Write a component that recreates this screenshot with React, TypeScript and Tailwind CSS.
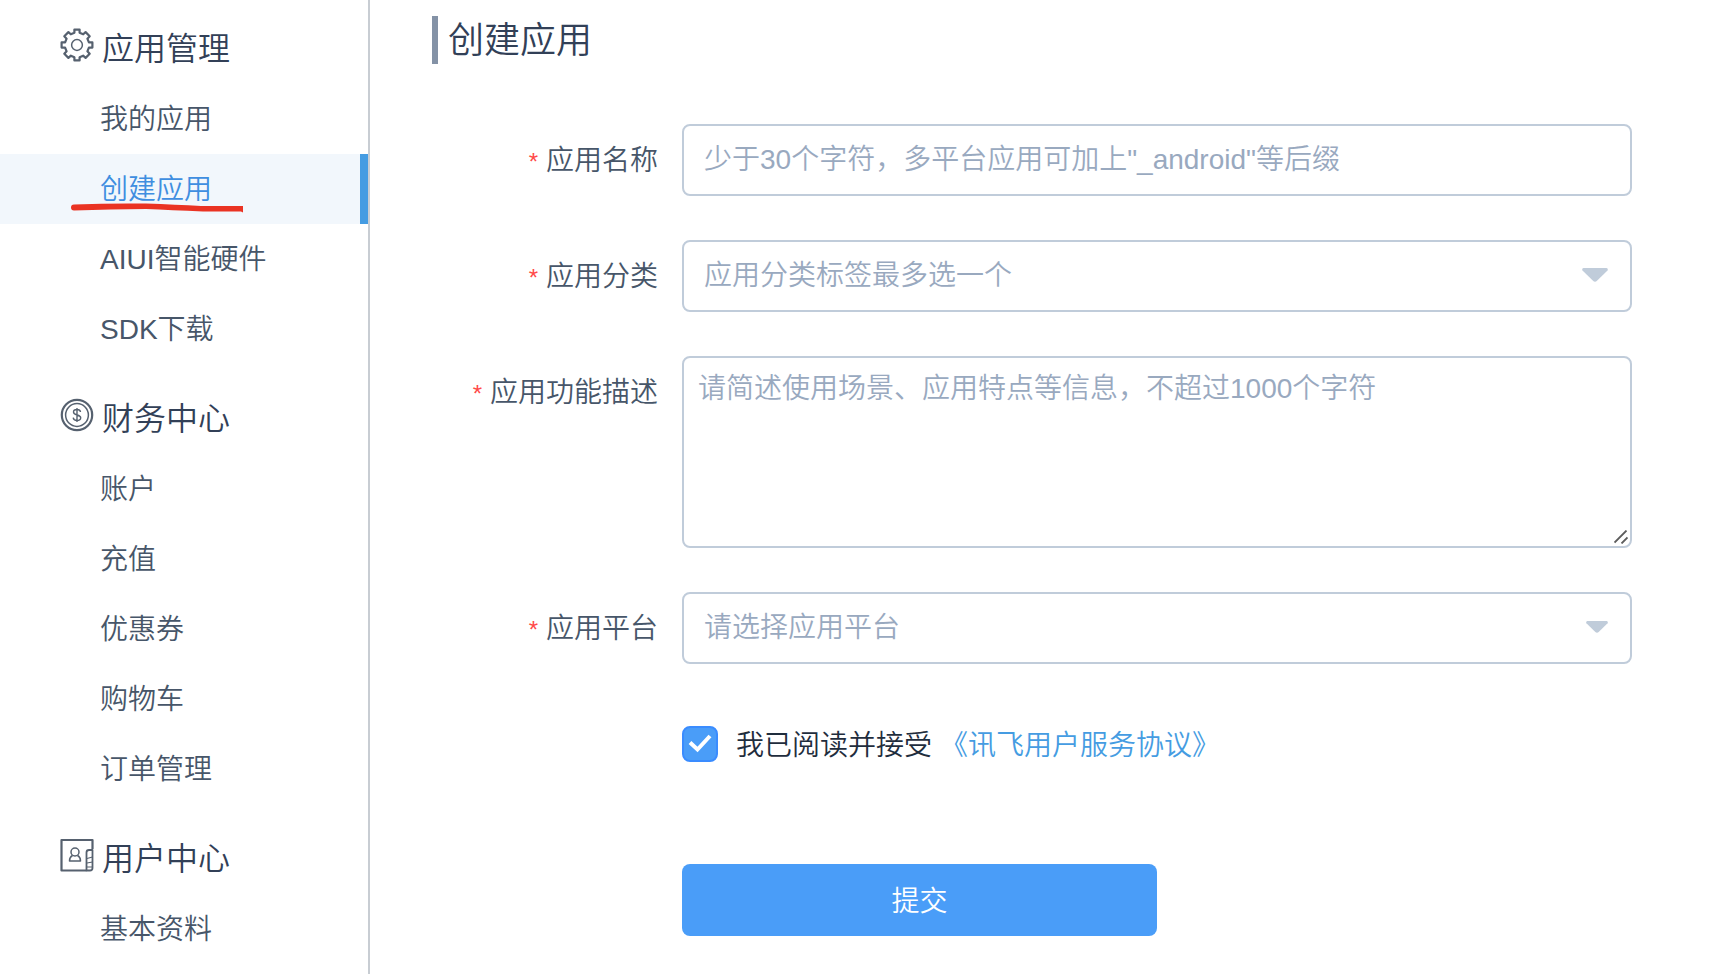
import React, { useState } from "react";

type MenuGroup = {
  title: string;
  icon: React.ReactNode;
  items: string[];
};

const GearIcon = () => (
  <svg className="w-[34px] h-[34px]" viewBox="0 0 34 34" fill="none" stroke="#56616f" strokeWidth="2.2" strokeLinejoin="round">
    <path d="M14.4 1.6h5.2v3.2l3.6 1.5 2.4-2.2 4.1 4.1-2.3 2.5 1.5 3.7h3.5v5.2h-3.5l-1.5 3.7 2.3 2.5-4.1 4.1-2.5-2.2-3.5 1.5v3.2h-5.2v-3.2l-3.5-1.5-2.5 2.2-4.1-4.1 2.3-2.5-1.5-3.7H1.6v-5.2h3.5l1.5-3.7-2.3-2.5 4.1-4.1 2.4 2.2 3.6-1.5z" />
    <circle cx="17" cy="17" r="5.4" strokeWidth="1.5" />
  </svg>
);

const CoinIcon = () => (
  <svg className="w-[34px] h-[34px]" viewBox="0 0 34 34" fill="none" stroke="#56616f">
    <circle cx="17" cy="17" r="15.2" strokeWidth="2.2" />
    <circle cx="17" cy="17" r="11.4" strokeWidth="1.5" />
    <path d="M20.5 14c-.2-1.7-1.6-2.500-3.500-2.500s-3.500.9-3.500 2.600c0 3.900 7.200 1.800 7.200 5.700 0 1.800-1.600 2.700-3.700 2.700s-3.600-1-3.800-2.800M17 10v14" strokeWidth="1.400" />
  </svg>
);

const UserCardIcon = () => (
  <svg className="w-[34px] h-[34px]" viewBox="0 0 34 34" fill="none" stroke="#56616f" strokeLinejoin="round">
    <path d="M32.500 11V2H1.500v30.500h25" strokeWidth="2.200" />
    <path d="M26.500 32.500V14.500q0-2.500 2.500-2.500h3.500v18q0 2.500-2.500 2.500z" strokeWidth="1.800" />
    <path d="M27 20.500l5.500-1.500M27 25l5.500-1M27 29h5" strokeWidth="1.200" />
    <circle cx="15" cy="14" r="4" strokeWidth="1.500" />
    <path d="M12.500 17.500Q9.500 19 9.500 23h11q0-4-3-5.500" strokeWidth="1.500" />
  </svg>
);

const menu: MenuGroup[] = [
  { title: "应用管理", icon: <GearIcon />, items: ["我的应用", "创建应用", "AIUI智能硬件", "SDK下载"] },
  { title: "财务中心", icon: <CoinIcon />, items: ["账户", "充值", "优惠券", "购物车", "订单管理"] },
  { title: "用户中心", icon: <UserCardIcon />, items: ["基本资料"] },
];

function FormRow({ id, label, children }: { id: string; label: string; children: React.ReactNode }) {
  return (
    <div className="flex items-start">
      <label htmlFor={id} className="h-[72px] w-[312px] shrink-0 pr-6 text-right leading-[74px] text-[#475669]">
        <span className="mr-2 text-2xl/6 text-[#ff4949]">*</span>
        {label}
      </label>
      <div className="relative flex flex-1">{children}</div>
    </div>
  );
}

export default function App() {
  const [active, setActive] = useState("创建应用");
  const [accepted, setAccepted] = useState(true);

  return (
    <div className="flex h-screen overflow-hidden bg-white text-[28px] font-[350] font-['Liberation_Sans','Noto_Sans_CJK_SC',sans-serif]">
      <nav className="w-[370px] shrink-0 overflow-hidden border-r-2 border-[#c8cdd3] pt-[14px] flex flex-col gap-5">
        {menu.map((group) => (
          <div key={group.title}>
            <h2 className="flex h-[70px] items-center gap-2 pl-[60px] text-[32px] text-[#324057]">
              <span className="pb-2">{group.icon}</span>
              {group.title}
            </h2>
            <ul>
              {group.items.map((item) => (
                <li key={item} className="relative">
                  <a
                    href="#"
                    onClick={() => setActive(item)}
                    className={
                      item === active
                        ? "block h-[70px] border-r-8 border-[#459ce2] bg-[#f2f7fc] pl-[100px] leading-[72px] text-[#3f8ee0]"
                        : "block h-[70px] pl-[100px] leading-[72px] text-[#475669]"
                    }
                  >
                    {item}
                  </a>
                  {item === "创建应用" && (
                    <svg className="pointer-events-none absolute left-[71px] top-[49px] h-[10px] w-[172px]" viewBox="0 0 172 10">
                      <path d="M3 1.500Q40 0 75 .5 105 1.500 130 3H172V9.500L170 8.500H132Q100 7 75 6 40 6 3 7.500A3 3 0 0 1 3 1.500z" fill="#ea3323" />
                    </svg>
                  )}
                </li>
              ))}
            </ul>
          </div>
        ))}
      </nav>

      <main className="flex-1 pt-4 pr-[82px]">
        <h1 className="ml-[62px] h-12 border-l-6 border-[#8492a6] pl-[10px] text-[36px] leading-[50px] text-[#324057]">
          创建应用
        </h1>

        <form className="mt-[60px] flex flex-col gap-11" onSubmit={(e) => e.preventDefault()}>
          <FormRow id="name" label="应用名称">
            <input
              id="name"
              type="text"
              placeholder={'少于30个字符，多平台应用可加上"_android"等后缀'}
              className="h-[72px] w-full rounded-lg border-2 border-[#c0ccda] px-5 text-[#475669] outline-none placeholder:text-[#99a9bf]"
            />
          </FormRow>

          <FormRow id="category" label="应用分类">
            <select
              id="category"
              className="h-[72px] w-full appearance-none rounded-lg border-2 border-[#c0ccda] bg-white px-5 text-[#99a9bf] outline-none"
            >
              <option>应用分类标签最多选一个</option>
            </select>
            <svg className="pointer-events-none absolute right-6 top-7 h-[14px] w-[26px]" viewBox="0 0 26 14" fill="#c0ccda">
              <path d="M1.500 0h23q2 .5 1 2.500L15 12.800q-2 1.800-4 0L.5 2.500Q-.5.5 1.500 0z" />
            </svg>
          </FormRow>

          <FormRow id="description" label="应用功能描述">
            <textarea
              id="description"
              placeholder="请简述使用场景、应用特点等信息，不超过1000个字符"
              className="h-[192px] w-full resize-none rounded-lg border-2 border-[#c0ccda] px-[14px] py-[10px] leading-[42px] text-[#475669] outline-none placeholder:text-[#99a9bf]"
            />
            <svg className="pointer-events-none absolute bottom-1 right-1 h-[14px] w-[14px]" viewBox="0 0 14 14" fill="none" stroke="#5c5c5c" strokeWidth="1.800">
              <path d="M.5 12.500L12.500.5M7.500 13.500L13.500 7.500" />
            </svg>
          </FormRow>

          <FormRow id="platform" label="应用平台">
            <select
              id="platform"
              className="h-[72px] w-full appearance-none rounded-lg border-2 border-[#c0ccda] bg-white px-5 text-[#99a9bf] outline-none"
            >
              <option>请选择应用平台</option>
            </select>
            <svg className="pointer-events-none absolute right-6 top-[29px] h-3 w-[22px]" viewBox="0 0 26 14" fill="#c0ccda">
              <path d="M1.500 0h23q2 .5 1 2.500L15 12.800q-2 1.800-4 0L.5 2.500Q-.5.5 1.500 0z" />
            </svg>
          </FormRow>

          <div className="ml-[312px] flex h-[72px] items-center leading-[74px]">
            <span className="relative mr-[18px] h-9 w-9">
              <input
                id="agree"
                type="checkbox"
                checked={accepted}
                onChange={(e) => setAccepted(e.target.checked)}
                className="block h-9 w-9 appearance-none rounded-lg border-2 border-[#c0ccda] checked:border-[#3a8cff] checked:bg-[#4a9df8]"
              />
              {accepted && (
                <svg className="pointer-events-none absolute inset-0 h-9 w-9" viewBox="0 0 36 36" fill="none" stroke="#fff" strokeWidth="4">
                  <path d="M8 16.500L15.500 23.500L28 10" />
                </svg>
              )}
            </span>
            <label htmlFor="agree" className="pt-1 text-[#1f2d3d]">我已阅读并接受</label>
            <a href="#" className="ml-2 pt-1 text-[#459ce2]">《讯飞用户服务协议》</a>
          </div>

          <div className="ml-[312px] pt-10">
            <button type="submit" className="h-[72px] w-1/2 rounded-lg bg-[#4a9df8] pt-1 text-white">
              提交
            </button>
          </div>
        </form>
      </main>
    </div>
  );
}
